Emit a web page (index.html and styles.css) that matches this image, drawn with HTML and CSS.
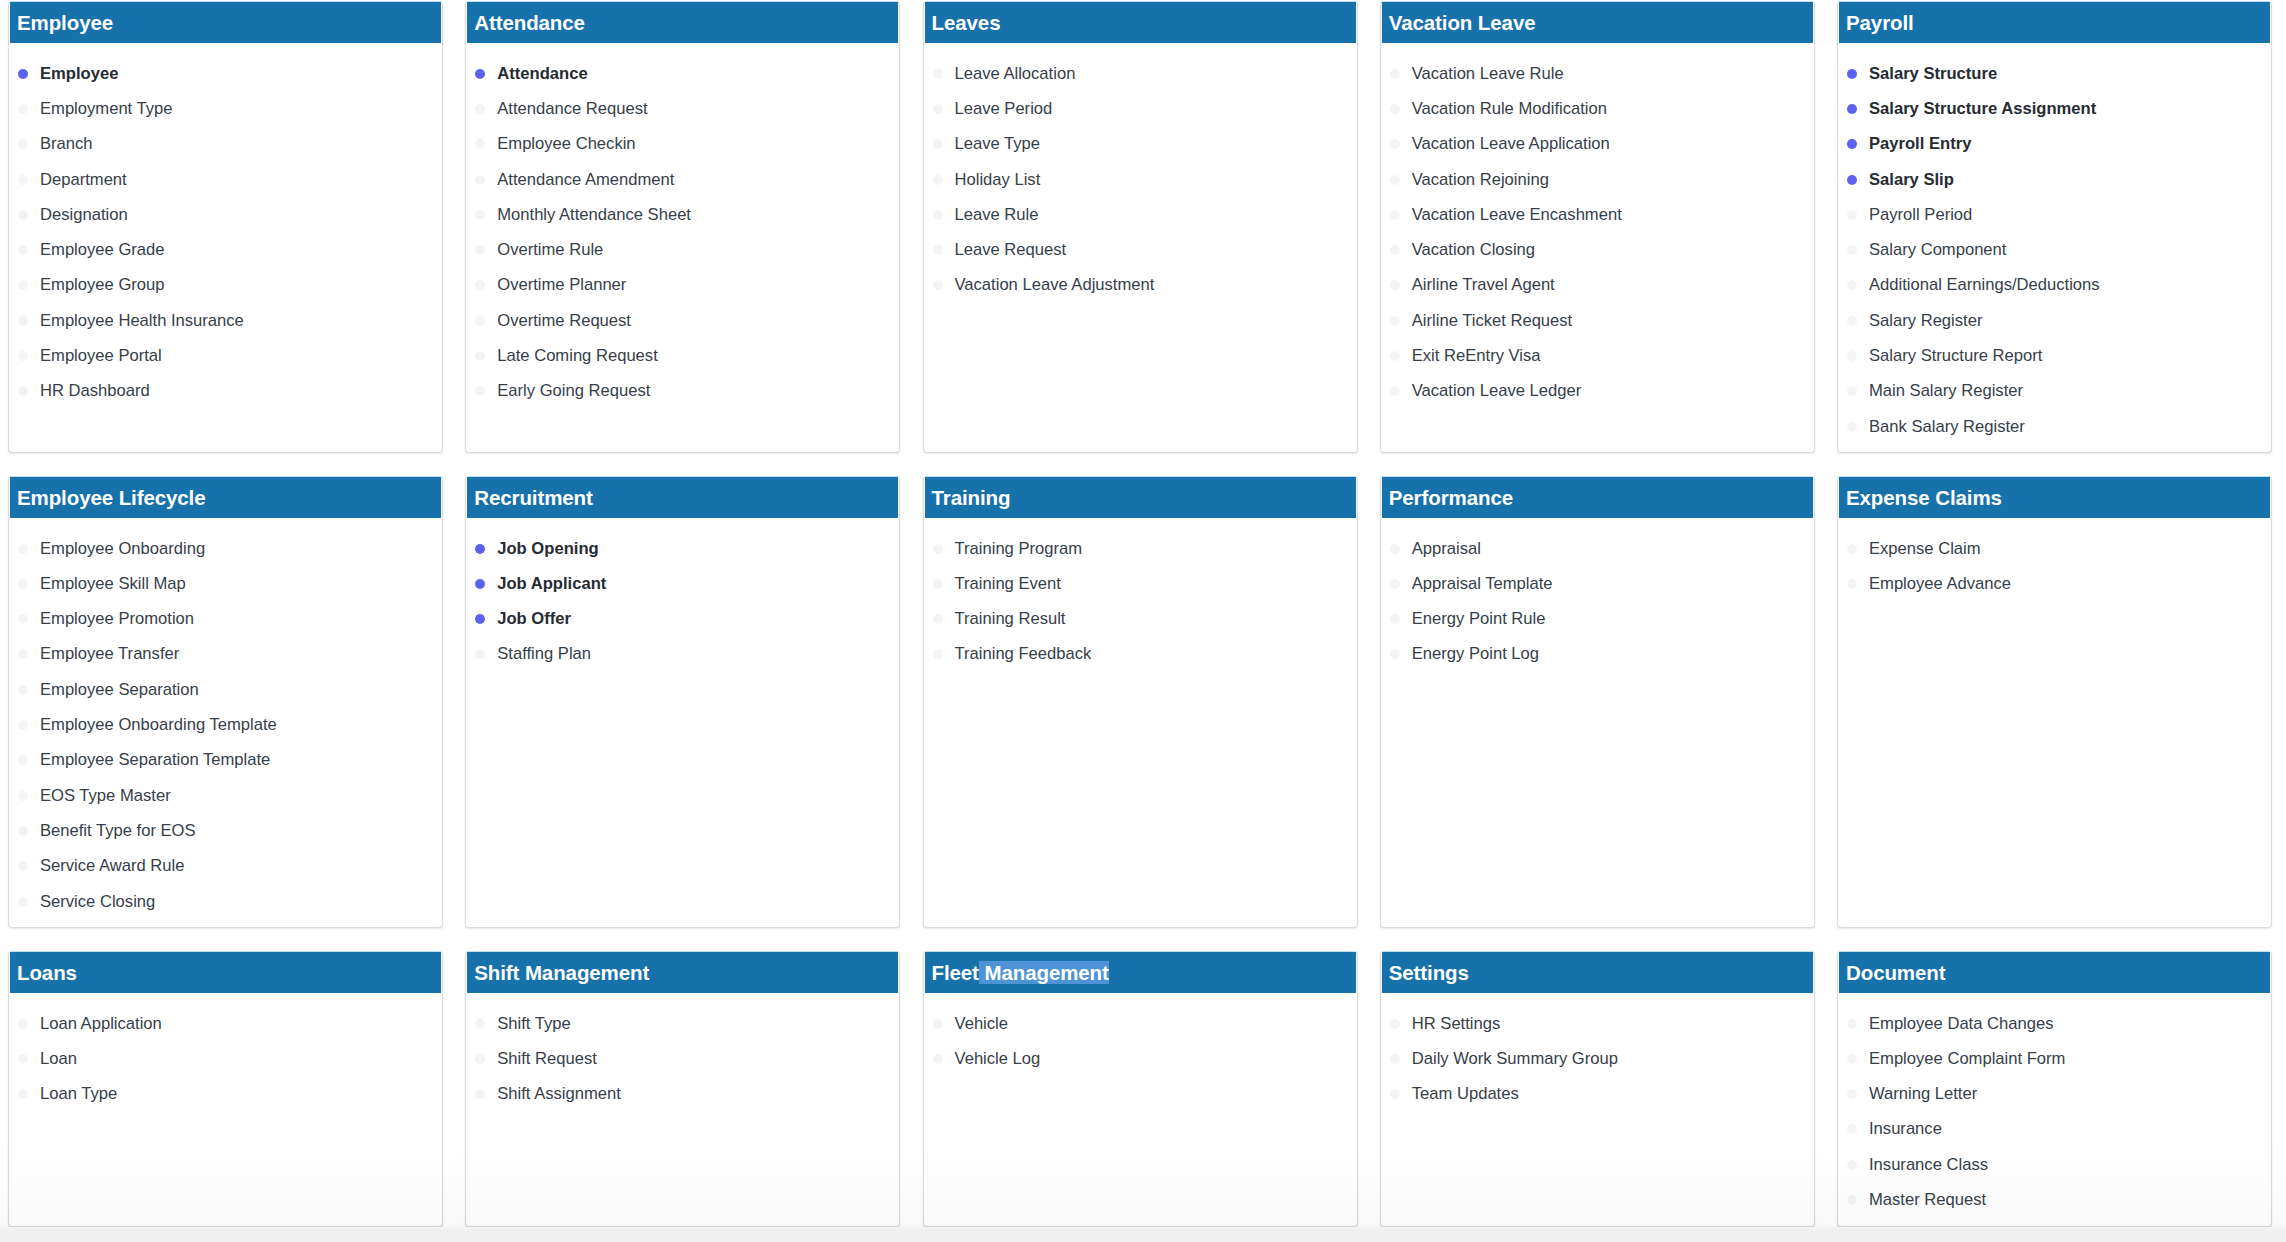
FILE: index.html
```html
<!DOCTYPE html>
<html lang="en">
<head>
<meta charset="utf-8">
<title>HR Modules</title>
<link rel="stylesheet" href="styles.css">
</head>
<body>
<div class="grid">
  <section class="card">
    <h2 class="card-head">Employee</h2>
    <ul class="links">
      <li class="on">Employee</li>
      <li>Employment Type</li>
      <li>Branch</li>
      <li>Department</li>
      <li>Designation</li>
      <li>Employee Grade</li>
      <li>Employee Group</li>
      <li>Employee Health Insurance</li>
      <li>Employee Portal</li>
      <li>HR Dashboard</li>
    </ul>
  </section>
  <section class="card">
    <h2 class="card-head">Attendance</h2>
    <ul class="links">
      <li class="on">Attendance</li>
      <li>Attendance Request</li>
      <li>Employee Checkin</li>
      <li>Attendance Amendment</li>
      <li>Monthly Attendance Sheet</li>
      <li>Overtime Rule</li>
      <li>Overtime Planner</li>
      <li>Overtime Request</li>
      <li>Late Coming Request</li>
      <li>Early Going Request</li>
    </ul>
  </section>
  <section class="card">
    <h2 class="card-head">Leaves</h2>
    <ul class="links">
      <li>Leave Allocation</li>
      <li>Leave Period</li>
      <li>Leave Type</li>
      <li>Holiday List</li>
      <li>Leave Rule</li>
      <li>Leave Request</li>
      <li>Vacation Leave Adjustment</li>
    </ul>
  </section>
  <section class="card">
    <h2 class="card-head">Vacation Leave</h2>
    <ul class="links">
      <li>Vacation Leave Rule</li>
      <li>Vacation Rule Modification</li>
      <li>Vacation Leave Application</li>
      <li>Vacation Rejoining</li>
      <li>Vacation Leave Encashment</li>
      <li>Vacation Closing</li>
      <li>Airline Travel Agent</li>
      <li>Airline Ticket Request</li>
      <li>Exit ReEntry Visa</li>
      <li>Vacation Leave Ledger</li>
    </ul>
  </section>
  <section class="card">
    <h2 class="card-head">Payroll</h2>
    <ul class="links">
      <li class="on">Salary Structure</li>
      <li class="on">Salary Structure Assignment</li>
      <li class="on">Payroll Entry</li>
      <li class="on">Salary Slip</li>
      <li>Payroll Period</li>
      <li>Salary Component</li>
      <li>Additional Earnings/Deductions</li>
      <li>Salary Register</li>
      <li>Salary Structure Report</li>
      <li>Main Salary Register</li>
      <li>Bank Salary Register</li>
    </ul>
  </section>

  <section class="card">
    <h2 class="card-head">Employee Lifecycle</h2>
    <ul class="links">
      <li>Employee Onboarding</li>
      <li>Employee Skill Map</li>
      <li>Employee Promotion</li>
      <li>Employee Transfer</li>
      <li>Employee Separation</li>
      <li>Employee Onboarding Template</li>
      <li>Employee Separation Template</li>
      <li>EOS Type Master</li>
      <li>Benefit Type for EOS</li>
      <li>Service Award Rule</li>
      <li>Service Closing</li>
    </ul>
  </section>
  <section class="card">
    <h2 class="card-head">Recruitment</h2>
    <ul class="links">
      <li class="on">Job Opening</li>
      <li class="on">Job Applicant</li>
      <li class="on">Job Offer</li>
      <li>Staffing Plan</li>
    </ul>
  </section>
  <section class="card">
    <h2 class="card-head">Training</h2>
    <ul class="links">
      <li>Training Program</li>
      <li>Training Event</li>
      <li>Training Result</li>
      <li>Training Feedback</li>
    </ul>
  </section>
  <section class="card">
    <h2 class="card-head">Performance</h2>
    <ul class="links">
      <li>Appraisal</li>
      <li>Appraisal Template</li>
      <li>Energy Point Rule</li>
      <li>Energy Point Log</li>
    </ul>
  </section>
  <section class="card">
    <h2 class="card-head">Expense Claims</h2>
    <ul class="links">
      <li>Expense Claim</li>
      <li>Employee Advance</li>
    </ul>
  </section>

  <section class="card">
    <h2 class="card-head">Loans</h2>
    <ul class="links">
      <li>Loan Application</li>
      <li>Loan</li>
      <li>Loan Type</li>
    </ul>
  </section>
  <section class="card">
    <h2 class="card-head">Shift Management</h2>
    <ul class="links">
      <li>Shift Type</li>
      <li>Shift Request</li>
      <li>Shift Assignment</li>
    </ul>
  </section>
  <section class="card">
    <h2 class="card-head">Fleet<span class="sel"> Management</span></h2>
    <ul class="links">
      <li>Vehicle</li>
      <li>Vehicle Log</li>
    </ul>
  </section>
  <section class="card">
    <h2 class="card-head">Settings</h2>
    <ul class="links">
      <li>HR Settings</li>
      <li>Daily Work Summary Group</li>
      <li>Team Updates</li>
    </ul>
  </section>
  <section class="card">
    <h2 class="card-head">Document</h2>
    <ul class="links">
      <li>Employee Data Changes</li>
      <li>Employee Complaint Form</li>
      <li>Warning Letter</li>
      <li>Insurance</li>
      <li>Insurance Class</li>
      <li>Master Request</li>
    </ul>
  </section>
</div>
<div class="fade"></div>
</body>
</html>
```

FILE: styles.css
```css
html, body {
  margin: 0;
  padding: 0;
  background: #ffffff;
  font-family: "Liberation Sans", Arial, Helvetica, sans-serif;
  color: #333c44;
  overflow: hidden;
}

.grid {
  display: grid;
  grid-template-columns: repeat(5, 435px);
  column-gap: 22.25px;
  row-gap: 22.7px;
  padding: 1px 0 0 8px;
}

.card {
  background: #ffffff;
  border: 1px solid #d9dcdf;
  border-top-color: #bfdff3;
  border-radius: 4px;
  box-shadow: 0 1px 2px rgba(0, 0, 0, 0.10);
  display: flex;
  flex-direction: column;
}

.card-head {
  margin: 0 1px;
  height: 41px;
  background: #1771aa;
  color: #ffffff;
  font-size: 20.5px;
  font-weight: bold;
  line-height: 41px;
  padding: 0 7px;
  letter-spacing: -0.1px;
}

.sel {
  background: #4d93d6;
}

.links {
  list-style: none;
  margin: 0;
  padding: 13px 0 8px 9px;
}

.links li {
  display: flex;
  align-items: center;
  gap: 12px;
  height: 35.3px;
  font-size: 16.6px;
  color: #36404a;
}

.links li::before {
  content: "";
  flex: 0 0 10px;
  width: 10px;
  height: 10px;
  border-radius: 50%;
  background: #f3f4f5;
}

.links li.on {
  font-weight: bold;
  color: #262c33;
}

.links li.on::before {
  background: #5c62f0;
}

.fade {
  position: fixed;
  left: 0;
  right: 0;
  bottom: 0;
  height: 100px;
  pointer-events: none;
  background: linear-gradient(to bottom, rgba(0, 0, 0, 0) 0%, rgba(0, 0, 0, 0.025) 82%, rgba(0, 0, 0, 0.06) 88%, rgba(0, 0, 0, 0.065) 100%);
}
```
